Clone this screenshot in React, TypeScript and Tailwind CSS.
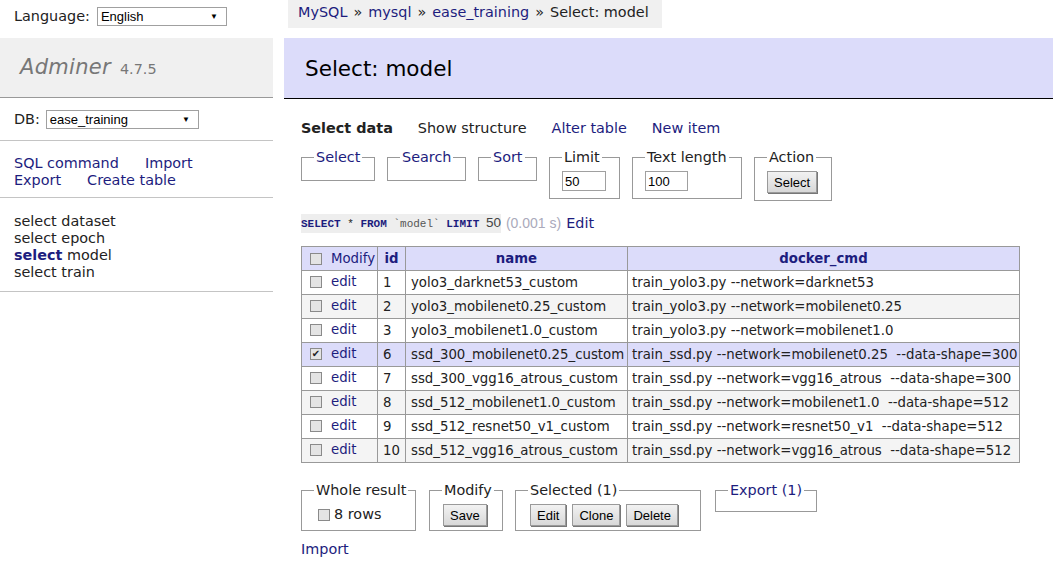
import React from "react";

const rows = [
  { id: 1, name: "yolo3_darknet53_custom", cmd: "train_yolo3.py --network=darknet53" },
  { id: 2, name: "yolo3_mobilenet0.25_custom", cmd: "train_yolo3.py --network=mobilenet0.25" },
  { id: 3, name: "yolo3_mobilenet1.0_custom", cmd: "train_yolo3.py --network=mobilenet1.0" },
  { id: 6, name: "ssd_300_mobilenet0.25_custom", cmd: "train_ssd.py --network=mobilenet0.25  --data-shape=300", checked: true },
  { id: 7, name: "ssd_300_vgg16_atrous_custom", cmd: "train_ssd.py --network=vgg16_atrous  --data-shape=300" },
  { id: 8, name: "ssd_512_mobilenet1.0_custom", cmd: "train_ssd.py --network=mobilenet1.0  --data-shape=512" },
  { id: 9, name: "ssd_512_resnet50_v1_custom", cmd: "train_ssd.py --network=resnet50_v1  --data-shape=512" },
  { id: 10, name: "ssd_512_vgg16_atrous_custom", cmd: "train_ssd.py --network=vgg16_atrous  --data-shape=512" },
];

const Box = ({ checked = false }: { checked?: boolean }) => (
  <span className="inline-flex h-[12px] w-[12px] shrink-0 items-center justify-center border border-[#8a8a8a] bg-[#e4e4e4] text-[10px] leading-none text-[#222]">
    {checked ? "✔" : ""}
  </span>
);

const Btn = ({ children }: { children: React.ReactNode }) => (
  <button className="h-[22px] border border-[#9a9a9a] bg-gradient-to-b from-[#f2f2f2] to-[#d8d8d8] px-[6px] font-['Liberation_Sans',sans-serif] text-[13px] text-black shadow-[1px_1px_0_#777]">
    {children}
  </button>
);

const Field = ({
  legend,
  link = false,
  className,
  children,
}: {
  legend: string;
  link?: boolean;
  className: string;
  children?: React.ReactNode;
}) => (
  <fieldset className={`min-w-0 shrink-0 border border-[#999] px-[12px] pb-[7px] pt-[5px] ${className}`}>
    <legend className={`whitespace-nowrap px-[2px] leading-[18px] ${link ? "text-[#1d1d7e]" : ""}`}>{legend}</legend>
    {children}
  </fieldset>
);

const Select = ({ value, className }: { value: string; className: string }) => (
  <div
    className={`flex h-[19px] items-center justify-between border border-[#a0a0a0] bg-white pl-[3px] pr-[8px] font-['Liberation_Sans',sans-serif] text-[13px] text-black ${className}`}
  >
    <span>{value}</span>
    <span className="text-[8px]">▼</span>
  </div>
);

export default function App() {
  return (
    <div className="flex min-h-[574px] w-[1053px] bg-white font-['DejaVu_Sans',sans-serif] text-[14.4px] leading-[17px] text-[#222]">
      {/* sidebar */}
      <div className="w-[273px] shrink-0">
        <div className="flex h-[38px] items-center gap-[7px] pl-[14px] pb-[6px]">
          <span>Language:</span>
          <Select value="English" className="w-[130px]" />
        </div>
        <div className="flex h-[60px] items-center border-b border-[#999] bg-[#f0f0f0] pl-[20px]">
          <span className="text-[21px] italic tracking-[0.3px] text-[#777]">Adminer</span>
          <span className="ml-[9px] mt-[4px] text-[14.4px] text-[#777]">4.7.5</span>
        </div>
        <div className="flex h-[43px] items-center gap-[6px] border-b border-[#c4c4c4] pl-[14px] pt-[1px]">
          <span>DB:</span>
          <Select value="ease_training" className="w-[153px]" />
        </div>
        <div className="border-b border-[#c4c4c4] pb-[8px] pl-[14px] pt-[14px] text-[#1d1d7e]">
          <div className="flex gap-[26px]">
            <span>SQL command</span>
            <span>Import</span>
          </div>
          <div className="flex gap-[26px]">
            <span>Export</span>
            <span>Create table</span>
          </div>
        </div>
        <div className="border-b border-[#c4c4c4] pb-[10px] pl-[14px] pt-[15px]">
          <div>select dataset</div>
          <div>select epoch</div>
          <div>
            <b className="text-[#1d1d7e]">select</b> model
          </div>
          <div>select train</div>
        </div>
      </div>

      {/* main */}
      <div className="ml-[11px] flex-1">
        <div className="ml-[4px] flex h-[28px] w-[374px] items-center bg-[#f0f0f0] pl-[10px] pb-[4px]">
          <span className="text-[#1d1d7e]">MySQL</span>
          <span className="px-[6px]">»</span>
          <span className="text-[#1d1d7e]">mysql</span>
          <span className="px-[6px]">»</span>
          <span className="text-[#1d1d7e]">ease_training</span>
          <span className="px-[6px]">»</span>
          <span>Select: model</span>
        </div>
        <div className="mt-[10px] flex h-[61px] items-center border-b border-black bg-[#dcdcfa] pl-[21px]">
          <h2 className="text-[21.5px] text-black">Select: model</h2>
        </div>

        <div className="pl-[17px]">
          <div className="mt-[21px] flex gap-[25px] text-[#1d1d7e]">
            <b className="text-[#222]">Select data</b>
            <span className="text-[#222]">Show structure</span>
            <span>Alter table</span>
            <span>New item</span>
          </div>

          <div className="mt-[11px] flex items-start gap-[12px]">
            <Field legend="Select" link className="h-[33px] w-[74px]" />
            <Field legend="Search" link className="h-[33px] w-[79px]" />
            <Field legend="Sort" link className="h-[33px] w-[59px]" />
            <Field legend="Limit" className="w-[71px]">
              <input
                readOnly
                value="50"
                className="h-[20px] w-[44px] border border-[#a0a0a0] px-[2px] font-['Liberation_Sans',sans-serif] text-[13px] text-black"
              />
            </Field>
            <Field legend="Text length" className="w-[110px]">
              <input
                readOnly
                value="100"
                className="h-[20px] w-[43px] border border-[#a0a0a0] px-[2px] font-['Liberation_Sans',sans-serif] text-[13px] text-black"
              />
            </Field>
            <Field legend="Action" className="w-[78px]">
              <Btn>Select</Btn>
            </Field>
          </div>

          <div className="mt-[13px] flex items-center">
            <code className="bg-[#eee] font-['Liberation_Mono',monospace] text-[11px]">
              <b className="text-[#1d1d7e]">SELECT</b> * <b className="text-[#1d1d7e]">FROM</b>{" "}
              <span className="text-[#555]">`model`</span> <b className="text-[#1d1d7e]">LIMIT</b>{" "}
              <span className="font-['Liberation_Sans',sans-serif] text-[13.5px] text-[#444]">50</span>
            </code>
            <span className="ml-[5px] font-['Liberation_Sans',sans-serif] text-[14px] text-[#aab]">(0.001 s)</span>
            <span className="ml-[5px] text-[#1d1d7e]">Edit</span>
          </div>

          <table className="mt-[13px] w-[719px] table-fixed border-collapse border border-[#999] text-[13.3px]">
            <thead>
              <tr className="h-[24px] bg-[#dcdcfa]">
                <th className="w-[76px] border border-[#999] pl-[8px] text-left font-normal text-[#1d1d7e]">
                  <div className="flex items-center gap-[9px]">
                    <Box />
                    <span>Modify</span>
                  </div>
                </th>
                <th className="w-[28px] border border-[#999] text-[#1d1d7e]">id</th>
                <th className="w-[222px] border border-[#999] text-[#1d1d7e]">name</th>
                <th className="border border-[#999] text-[#1d1d7e]">docker_cmd</th>
              </tr>
            </thead>
            <tbody>
              {rows.map((r, i) => (
                <tr
                  key={r.id}
                  className={`h-[24px] ${r.checked ? "bg-[#dcdcfa]" : i % 2 ? "bg-[#f4f4f4]" : "bg-white"}`}
                >
                  <td className="border-y border-l border-[#999] pl-[8px]">
                    <div className="flex items-center gap-[9px] pb-[2px]">
                      <Box checked={r.checked} />
                      <span className="text-[#1d1d7e]">edit</span>
                    </div>
                  </td>
                  <td className="border border-[#999] px-[5px]">{r.id}</td>
                  <td className="whitespace-nowrap border border-[#999] px-[5px]">{r.name}</td>
                  <td className="whitespace-pre border border-[#999] px-[4px]">{r.cmd}</td>
                </tr>
              ))}
            </tbody>
          </table>

          <div className="mt-[18px] flex items-start">
            <Field legend="Whole result" className="h-[50px] w-[115px]">
              <div className="flex items-center gap-[4px] pl-[4px] pt-[2px]">
                <Box />
                <span>8 rows</span>
              </div>
            </Field>
            <Field legend="Modify" className="ml-[13px] h-[50px] w-[74px]">
              <div className="pl-[1px]">
                <Btn>Save</Btn>
              </div>
            </Field>
            <Field legend="Selected (1)" className="ml-[12px] h-[50px] w-[186px]">
              <div className="flex gap-[6px] pl-[2px]">
                <Btn>Edit</Btn>
                <Btn>Clone</Btn>
                <Btn>Delete</Btn>
              </div>
            </Field>
            <Field legend="Export (1)" link className="ml-[14px] h-[29px] w-[102px]" />
          </div>

          <div className="mt-[10px] text-[#1d1d7e]">Import</div>
        </div>
      </div>
    </div>
  );
}
